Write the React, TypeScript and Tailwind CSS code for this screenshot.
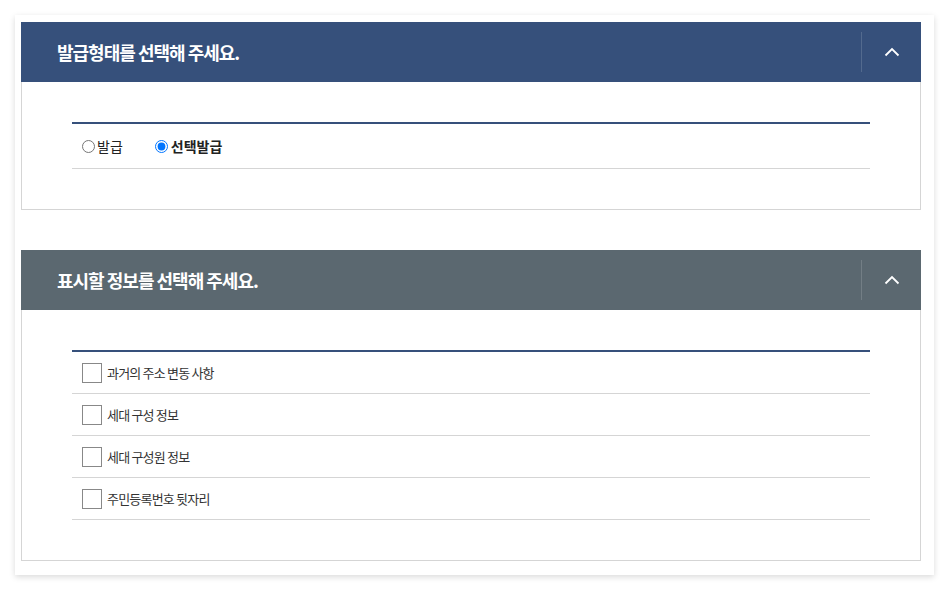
import React from 'react';

const FONT = { fontFamily: '"Noto Sans CJK KR", "Noto Sans", sans-serif' };

const Chevron: React.FC = () => (
  <svg width="16" height="10" viewBox="0 0 16 10" fill="none">
    <path d="M1.5 8.5L8 2l6.5 6.5" stroke="white" strokeWidth="1.8" />
  </svg>
);

const SectionHeader: React.FC<{ title: string; bg: string }> = ({ title, bg }) => (
  <div className={`-mx-px flex h-[60px] items-center ${bg}`}>
    <h2 className="flex-1 pl-[36px] text-[18px] font-bold tracking-[-1px] text-white">{title}</h2>
    <div className="h-[40px] w-px bg-white/15" />
    <button className="flex h-full w-[59px] items-center justify-center">
      <Chevron />
    </button>
  </div>
);

const options = ['과거의 주소 변동 사항', '세대 구성 정보', '세대 구성원 정보', '주민등록번호 뒷자리'];

export default function App() {
  return (
    <div className="min-h-screen bg-white p-[15px]" style={FONT}>
      <div className="w-[919px] bg-white pl-[6px] pr-[13px] pt-[7px] pb-[14px] shadow-[0_2px_6px_rgba(0,0,0,0.15)]">
        <section className="border-x border-b border-[#d5d5d5]">
          <SectionHeader title="발급형태를 선택해 주세요." bg="bg-[#36507b]" />
          <div className="px-[50px] py-[40px]">
            <div className="border-t-2 border-b border-t-[#36507b] border-b-[#d5d5d5]">
              <div className="flex h-[44px] items-center pl-[10px] text-[14px] text-[#222]">
                <label className="flex items-center">
                  <input type="radio" name="issue" className="m-0 h-[13px] w-[13px]" />
                  <span className="ml-[2px]">발급</span>
                </label>
                <label className="ml-[32px] flex items-center">
                  <input type="radio" name="issue" defaultChecked className="m-0 h-[13px] w-[13px]" />
                  <span className="ml-[3px] font-bold">선택발급</span>
                </label>
              </div>
            </div>
          </div>
        </section>

        <section className="mt-[40px] border-x border-b border-[#d5d5d5]">
          <SectionHeader title="표시할 정보를 선택해 주세요." bg="bg-[#5b6870]" />
          <div className="px-[50px] py-[40px]">
            <ul className="border-t-2 border-t-[#36507b]">
              {options.map((o) => (
                <li key={o} className="flex h-[42px] items-center border-b border-[#d5d5d5] pl-[10px]">
                  <span className="h-[20px] w-[20px] border border-[#888] bg-white" />
                  <span className="ml-[5px] text-[13px] tracking-[-0.8px] text-[#333]">{o}</span>
                </li>
              ))}
            </ul>
          </div>
        </section>
      </div>
    </div>
  );
}
